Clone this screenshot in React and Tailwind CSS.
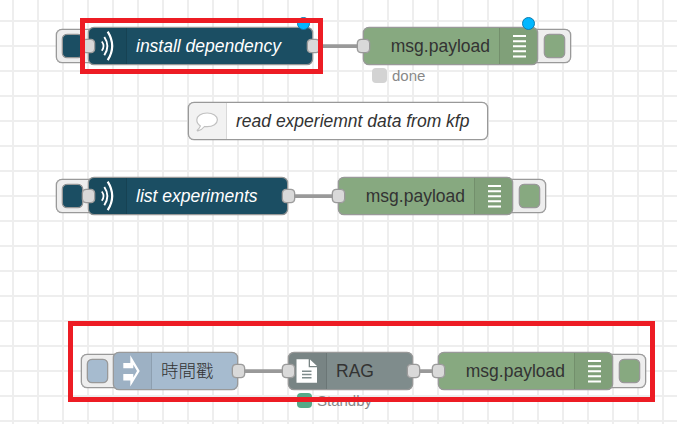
import React from "react";

const FONT = "font-['Liberation_Sans','Noto_Sans_CJK_TC',sans-serif]";

function Waves() {
  return (
    <svg className="h-9 w-9" viewBox="0 0 36 36" fill="none" stroke="#fff">
      <path d="M11.800 13.500Q15.300 18 11.800 22.700" strokeWidth="1.700" />
      <path d="M14.300 9Q20.500 18 14.300 27.200" strokeWidth="1.900" />
      <path d="M17.700 3.600Q26.700 18 17.700 32.200" strokeWidth="2.200" />
    </svg>
  );
}

function Bubble() {
  return (
    <svg className="h-9 w-9" viewBox="0 0 36 36" fill="#fff" stroke="#c0c0c0" strokeWidth="1.200">
      <path d="M17.100 10c5.900 0 10.300 3 10.300 6.800s-4.400 6.900-10.300 6.900c-.900 0-1.800-.1-2.600-.2-1.700 2.200-3.700 3.800-6.700 4.400-.6.100-.8-.7-.3-1 1.700-1.300 2.400-2.400 2.900-4-2.200-1.300-3.600-3.500-3.600-6.100 0-3.800 4.400-6.800 10.300-6.800z" />
    </svg>
  );
}

function Inject() {
  return (
    <svg className="h-9 w-9" viewBox="0 0 36 36">
      <path fill="#fff" d="M15.300 2.200 24.700 18 15.300 33.500V27.500H8.300V21H18.300V24.600L22 18 18.300 11.800V15.300H8.300V10H15.300z" />
    </svg>
  );
}

function Doc() {
  return (
    <svg className="h-9 w-9" viewBox="0 0 36 36">
      <path fill="#fff" d="M6.500 6.300H18.700V14.300H27V29.800H6.500zM20 6.500 27 13.100H20z" />
      <path stroke="#7f8c8c" strokeWidth="1.400" d="M12 18.200H21.500M12 21.500H21.500M12 24.700H21.500" />
    </svg>
  );
}

function Bars() {
  return (
    <svg className="h-9 w-9" viewBox="0 0 36 36" stroke="#fff" strokeWidth="2">
      <path d="M12 8H25M12 13.200H25M12 18.300H25M12 23.300H25M12 28.400H25" />
    </svg>
  );
}

function Port({ at }) {
  return (
    <span className={`absolute top-[12px] h-[14px] w-[13px] rounded-[4px] border border-[#999] bg-[#d9d9d9] shadow-[0_0_0_0.3px_#999] ${at}`} />
  );
}

function Button({ side, fill }) {
  return (
    <span
      className={`absolute top-[2px] flex h-[34px] w-[40px] items-center rounded-[6px] border border-[#999] bg-[#eee] shadow-[0_0_0_0.3px_#999] ${
        side === "left" ? "left-[-32px] justify-start pl-[5px]" : "right-[-33px] justify-end pr-[5px]"
      }`}
    >
      <span className={`h-6 w-[21px] rounded-[5px] border border-[#999] shadow-[0_0_0_0.3px_#999] ${fill}`} />
    </span>
  );
}

function Node({ pos, fill, text, icon, iconRight, label, button, input, output, dot, italic }) {
  return (
    <div className={`absolute h-[38px] ${pos}`}>
      {button && <Button side={button} fill={fill} />}
      <div className={`relative flex h-full items-center overflow-hidden rounded-[6px] border border-[#999] shadow-[0_0_0_0.3px_#999] ${fill} ${iconRight ? "flex-row-reverse" : ""}`}>
        <span className={`flex h-full w-[38px] shrink-0 items-center justify-center border-black/10 bg-black/5 ${iconRight ? "border-l" : "border-r"}`}>
          {icon}
        </span>
        <span className={`whitespace-nowrap text-[17.5px] leading-5 ${italic ? "italic" : ""} ${iconRight ? "pr-[9px]" : "pl-[9px]"} ${text}`}>
          {label}
        </span>
      </div>
      {input && <Port at="left-[-6px]" />}
      {output && <Port at="right-[-7px]" />}
      {dot && <span className="absolute right-[3px] top-[-10px] size-[13px] rounded-full border border-[#0b7db0] bg-[#00b7ff]" />}
    </div>
  );
}

function Status({ pos, fill, children }) {
  return (
    <div className={`absolute flex h-[15px] items-center gap-[5px] ${pos}`}>
      <span className={`size-[15px] rounded-[4px] ${fill}`} />
      <span className="text-[15px] leading-[15px] text-[#888]">{children}</span>
    </div>
  );
}

const DARK = "bg-[#1b4e63]";
const GREEN = "bg-[#87a980]";
const INK = "text-[#333]";

export default function App() {
  return (
    <main
      className={`relative h-[424px] w-[677px] overflow-hidden bg-white bg-[linear-gradient(to_right,#eee_2px,transparent_2px),linear-gradient(to_bottom,#eee_2px,transparent_2px)] bg-[length:25px_25px] bg-[position:12px_20px] ${FONT}`}
    >
      <svg className="absolute inset-0 h-full w-full" stroke="#999" strokeWidth="3.75">
        <path d="M313 46H363M288 196H338M238 371H288M413 371H438" />
      </svg>

      <Node pos="left-[88px] top-[27px] w-[225px]" fill={DARK} text="text-white" icon={<Waves />} label="install dependency" button="left" input output dot italic />
      <Node pos="left-[362.5px] top-[27px] w-[175.5px]" fill={GREEN} text={INK} icon={<Bars />} iconRight label="msg.payload" button="right" input dot />
      <Status pos="left-[372px] top-[68px]" fill="bg-[#d3d3d3]">done</Status>

      <Node pos="left-[188px] top-[102px] w-[300px]" fill="bg-white" text={INK} icon={<Bubble />} label="read experiemnt data from kfp" italic />

      <Node pos="left-[88px] top-[177px] w-[200px]" fill={DARK} text="text-white" icon={<Waves />} label="list experiments" button="left" input output italic />
      <Node pos="left-[337.5px] top-[177px] w-[175.5px]" fill={GREEN} text={INK} icon={<Bars />} iconRight label="msg.payload" button="right" input />

      <Node pos="left-[113px] top-[352px] w-[125px]" fill="bg-[#a6bbcf]" text={`${INK} font-light`} icon={<Inject />} label="時間戳" button="left" output />
      <Node pos="left-[288px] top-[352px] w-[125px]" fill="bg-[#7f8c8c]" text={INK} icon={<Doc />} label="RAG" input output />
      <Node pos="left-[437.5px] top-[352px] w-[175.5px]" fill={GREEN} text={INK} icon={<Bars />} iconRight label="msg.payload" button="right" input />
      <Status pos="left-[297px] top-[393px]" fill="bg-[#5a8]">Standby</Status>

      <div className="absolute left-[80px] top-[18px] h-[56px] w-[243px] border-[5px] border-[#ed1c24]" />
      <div className="absolute left-[68px] top-[321px] h-[81px] w-[587px] border-[5px] border-[#ed1c24]" />
    </main>
  );
}
